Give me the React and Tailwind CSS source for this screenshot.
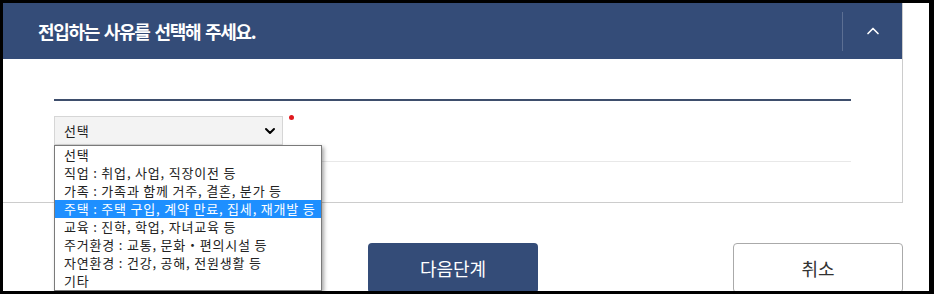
import { ChevronUp, ChevronDown } from "lucide-react";

const options = [
  "선택",
  "직업 : 취업, 사업, 직장이전 등",
  "가족 : 가족과 함께 거주, 결혼, 분가 등",
  "주택 : 주택 구입, 계약 만료, 집세, 재개발 등",
  "교육 : 진학, 학업, 자녀교육 등",
  "주거환경 : 교통, 문화・편의시설 등",
  "자연환경 : 건강, 공해, 전원생활 등",
  "기타",
];

export default function App() {
  const selected = 3;

  return (
    <div className="w-[934px] h-[294px] bg-black pt-[3px] pl-[3px] pr-[5px] pb-[3px] font-['Noto_Sans_CJK_KR','Noto_Sans',sans-serif]">
      <div className="h-full bg-white overflow-hidden">
        {/* Panel */}
        <div className="w-[900px] border-r border-b border-[#cccccc]">
          {/* Header */}
          <div className="h-[56px] bg-[#344c78] flex items-center justify-between">
            <h2 className="pl-[35px] text-white text-[18px] font-bold tracking-[-1.3px] [word-spacing:2px] leading-none">
              전입하는 사유를 선택해 주세요.
            </h2>
            <div className="w-[60px] h-[39px] border-l border-white/20 flex items-center justify-center">
              <ChevronUp className="w-5 h-5 text-white" strokeWidth={2} />
            </div>
          </div>

          {/* Body */}
          <div className="px-[51px] pt-[40px] h-[143px]">
            <div className="h-[2px] bg-[#3e4e6c]" />
            <div className="relative mt-[15px] flex items-start">
              <div className="w-[229px] h-[29px] bg-[#f3f3f3] border border-[#d6d6d6] flex items-center justify-between pl-[9px] pr-[4px] text-[13px] tracking-[0.8px] text-[#222]">
                <span>선택</span>
                <ChevronDown className="w-4 h-4 text-black" strokeWidth={3} />
              </div>
              <span className="ml-[6px] mt-[-1px] w-[5px] h-[5px] rounded-full bg-[#e0191e]" />

              {/* Open listbox */}
              <ul className="absolute left-0 top-[29px] w-[268px] bg-white border border-[#7a7a7a] shadow-[2px_2px_4px_rgba(0,0,0,0.35)] z-10 text-[13px] tracking-[0.8px] text-[#222]">
                {options.map((opt, i) => (
                  <li
                    key={opt}
                    className={
                      i === selected
                        ? "h-[18px] leading-[18px] pl-[9px] bg-[#1e8fff] text-white whitespace-nowrap"
                        : "h-[18px] leading-[18px] pl-[9px] whitespace-nowrap"
                    }
                  >
                    {opt}
                  </li>
                ))}
              </ul>
            </div>
            <div className="mt-[16px] h-px bg-[#e8e8e8]" />
          </div>
        </div>

        {/* Buttons */}
        <div className="mt-[40px] pl-[365px] flex gap-[195px]">
          <button className="w-[170px] h-[50px] rounded-[4px] bg-[#344c78] text-white text-[18px]">
            다음단계
          </button>
          <button className="w-[170px] h-[50px] rounded-[4px] bg-white border border-[#aaaaaa] text-[#333] text-[18px]">
            취소
          </button>
        </div>
      </div>
    </div>
  );
}
